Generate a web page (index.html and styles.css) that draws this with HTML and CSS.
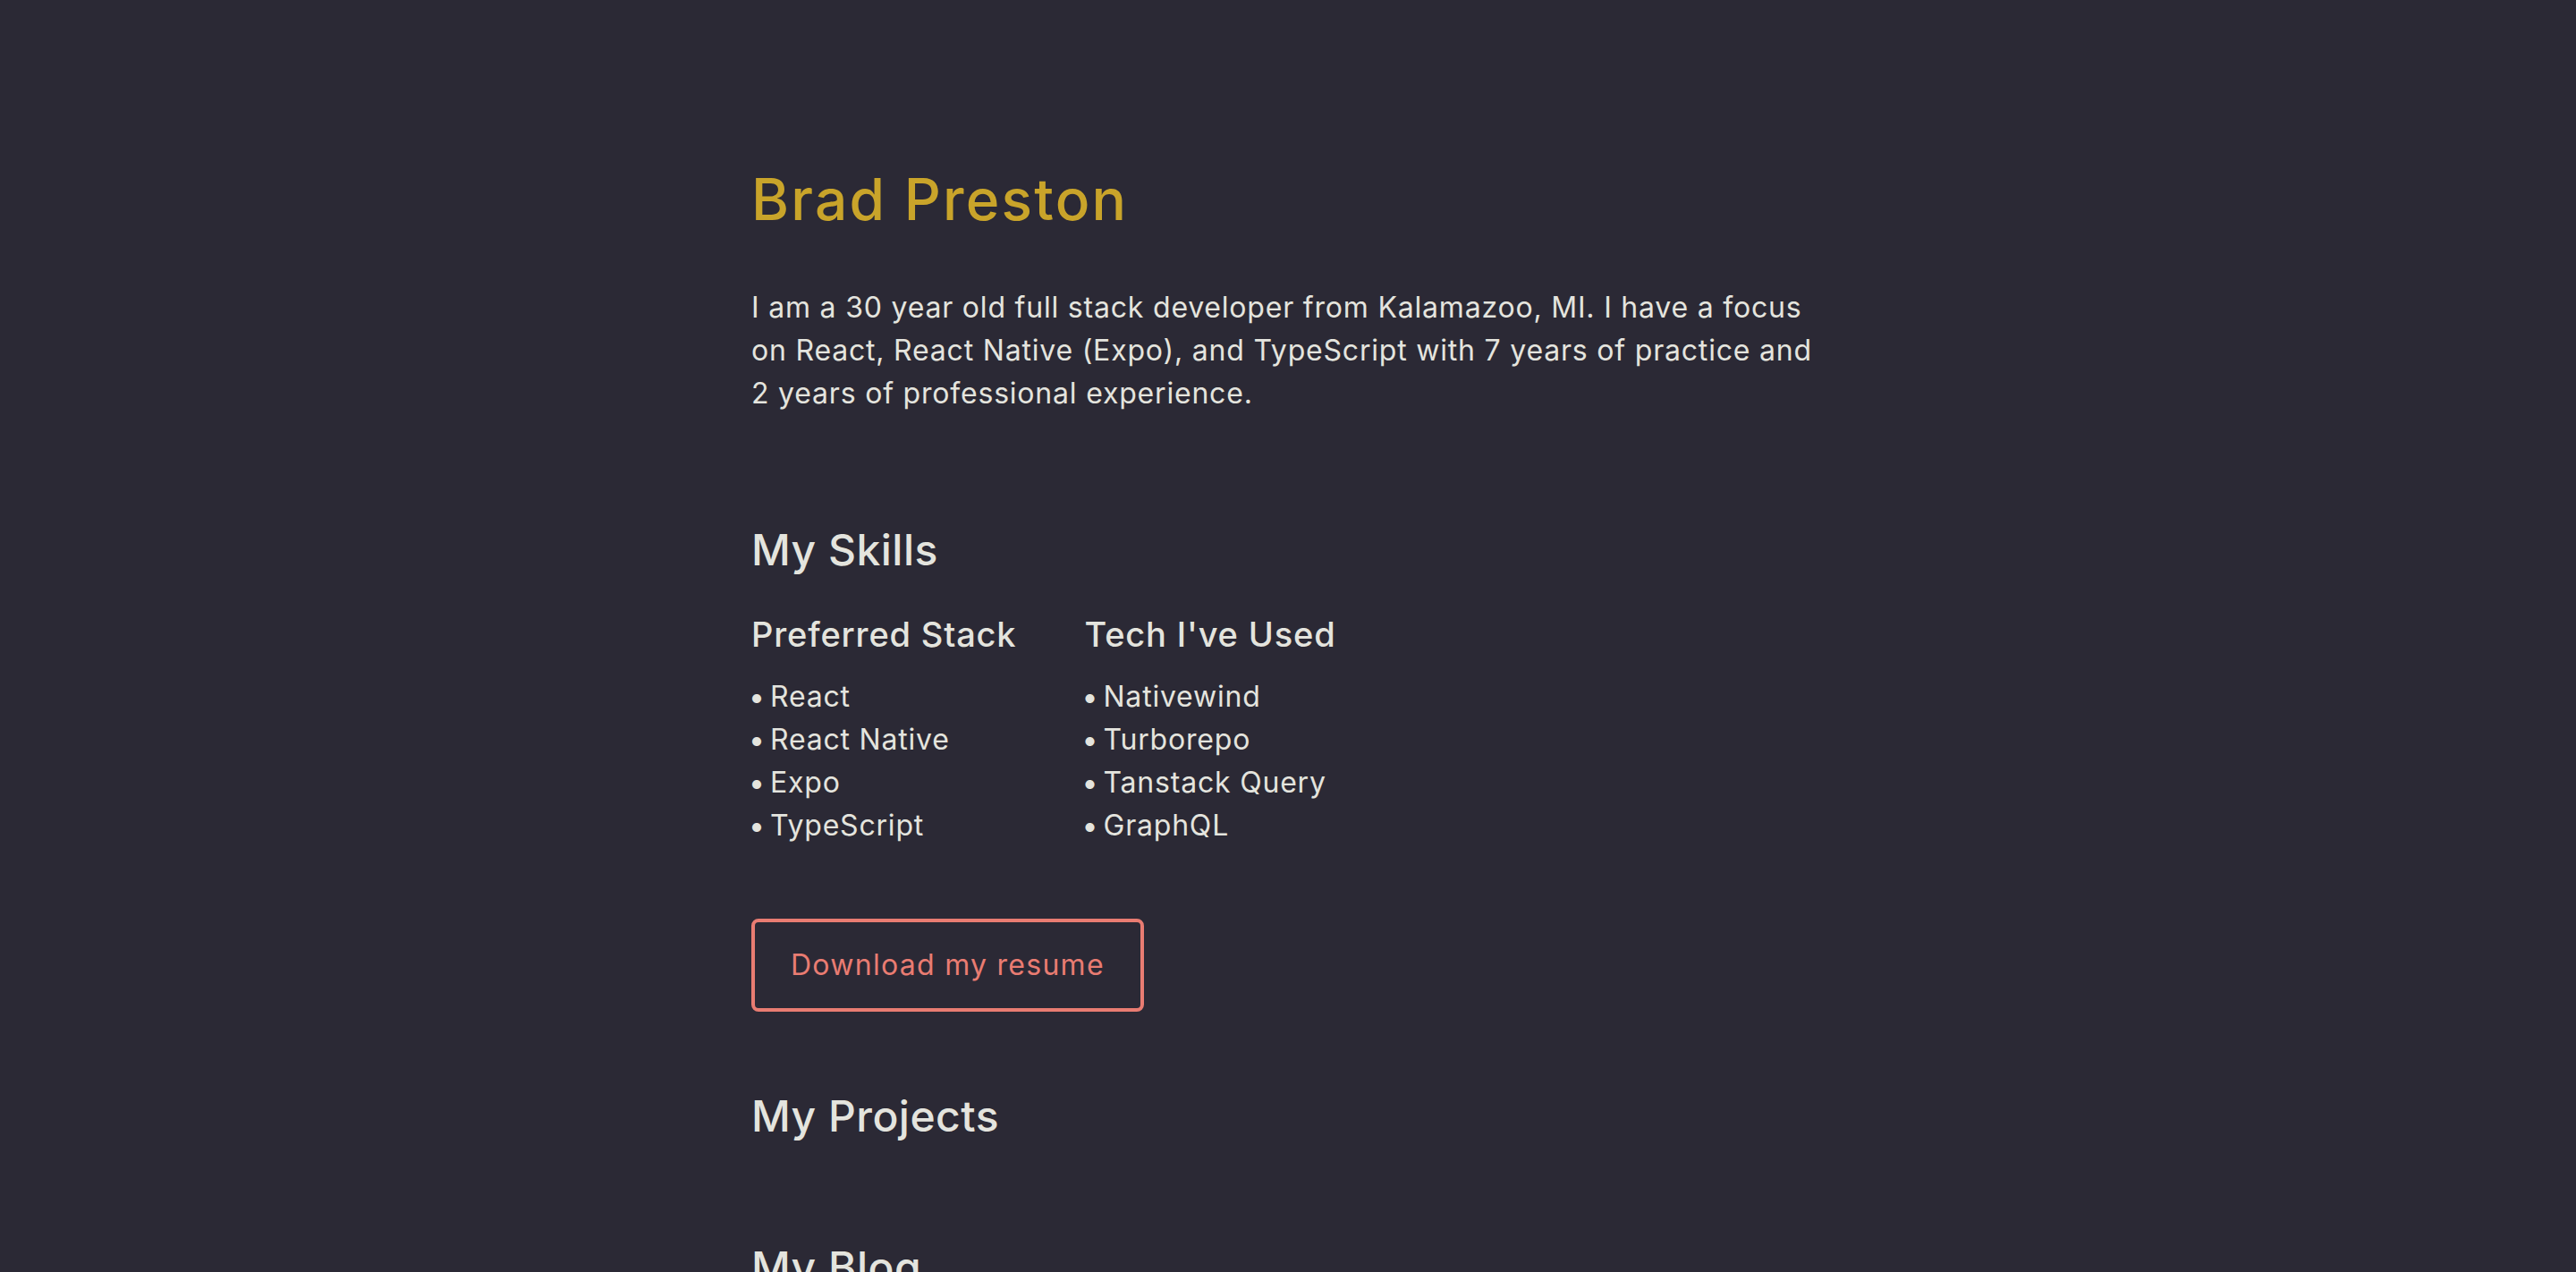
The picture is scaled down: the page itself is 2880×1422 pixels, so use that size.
FILE: index.html
```html
<!DOCTYPE html>
<html lang="en">
<head>
<meta charset="utf-8">
<title>Brad Preston</title>
<link rel="stylesheet" href="styles.css">
</head>
<body>
<main class="page">
  <header class="intro">
    <h1 class="name">Brad Preston</h1>
    <p class="bio">I am a 30 year old full stack developer from Kalamazoo, MI. I have a focus on React, React Native (Expo), and TypeScript with 7 years of practice and 2 years of professional experience.</p>
  </header>

  <section class="skills">
    <h2 class="section-title">My Skills</h2>
    <div class="skill-columns">
      <div class="skill-col">
        <h3 class="col-title">Preferred Stack</h3>
        <ul class="skill-list">
          <li>React</li>
          <li>React Native</li>
          <li>Expo</li>
          <li>TypeScript</li>
        </ul>
      </div>
      <div class="skill-col">
        <h3 class="col-title">Tech I've Used</h3>
        <ul class="skill-list">
          <li>Nativewind</li>
          <li>Turborepo</li>
          <li>Tanstack Query</li>
          <li>GraphQL</li>
        </ul>
      </div>
    </div>
    <a class="resume-btn" href="#">Download my resume</a>
  </section>

  <section class="projects">
    <h2 class="section-title">My Projects</h2>
  </section>

  <section class="blog">
    <h2 class="section-title">My Blog</h2>
  </section>
</main>
</body>
</html>
```
FILE: styles.css
```css
* { box-sizing: border-box; }

html, body {
  margin: 0;
  padding: 0;
  background: #2b2935;
}

body {
  font-family: Inter, "Open Sans", sans-serif;
  color: #e4e4de;
  font-size: 32px;
  line-height: 48px;
  letter-spacing: 0.025em;
}

.page {
  max-width: 1200px;
  margin: 0 auto;
  padding-top: 175px;
}

.name {
  margin: 0;
  font-size: 64px;
  line-height: 96px;
  font-weight: 500;
  letter-spacing: 0.035em;
  color: #c9a42a;
}

.bio {
  margin: 49px 0 0;
  font-size: 32px;
  line-height: 48px;
}

.section-title {
  margin: 0;
  font-size: 48px;
  line-height: 72px;
  font-weight: 500;
  letter-spacing: 0.01em;
  color: #e4e4de;
}

.skills {
  margin-top: 115px;
}

.skill-columns {
  display: flex;
  gap: 76px;
  margin-top: 30px;
}

.col-title {
  margin: 0;
  font-size: 38px;
  line-height: 57px;
  font-weight: 500;
  letter-spacing: 0.022em;
}

.skill-list {
  list-style: none;
  margin: 17px 0 0;
  padding: 0;
}

.skill-list li::before {
  content: "\2022";
  display: inline-block;
  width: 24px;
  margin-left: -3px;
}

.resume-btn {
  display: inline-block;
  margin-top: 80px;
  padding: 24px 40px;
  border: 4px solid #e97c72;
  border-radius: 8px;
  color: #e97c72;
  text-decoration: none;
  font-size: 32px;
  line-height: 48px;
  letter-spacing: 0.04em;
}

.projects {
  margin-top: 81px;
}

.blog {
  margin-top: 97px;
}
```
